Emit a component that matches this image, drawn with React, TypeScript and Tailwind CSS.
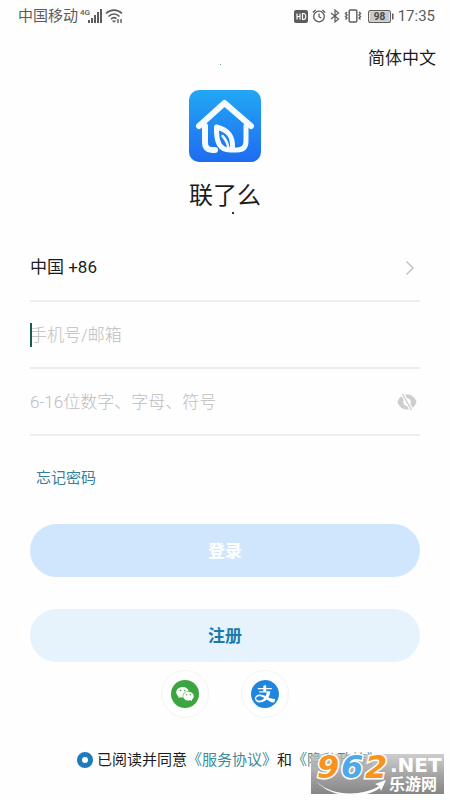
import { useState } from "react";
import { ChevronRight } from "lucide-react";
import { AiFillAlipayCircle, AiFillWechat } from "react-icons/ai";

function StatusBar() {
  return (
    <div className="flex h-8 items-center justify-between pl-[18px] pr-[15px] text-[15px] text-[#5c5c5c]">
      <div className="flex items-center gap-[2px]">
        <span>中国移动</span>
        <svg width="23" height="16" viewBox="0 0 23 16" fill="#5c5c5c">
          <text x="0" y="7" fontSize="8" fontWeight="500">4G</text>
          <rect x="8" y="12" width="2" height="3" />
          <rect x="11" y="10" width="2" height="5" />
          <rect x="14" y="7" width="2" height="8" />
          <rect x="17" y="4" width="2" height="11" />
          <rect x="20" y="1" width="2" height="14" />
        </svg>
        <svg width="18" height="16" viewBox="0 0 18 16" fill="none" stroke="#5c5c5c" strokeWidth="1.7">
          <path d="M1 5.5C5.5 1 12.5 1 17 5.5" />
          <path d="M3.5 8.5C6.8 5.3 11.2 5.3 14.5 8.5" />
          <path d="M6 11.2c1.7-1.7 3.7-1.9 5.5-.6" />
          <path d="M9 14.8 6.7 12.6h4.6z" fill="#5c5c5c" stroke="none" />
          <path d="M13 11v4M16 11v4" strokeWidth="1.4" />
        </svg>
      </div>
      <div className="flex items-center gap-1">
        <svg width="14" height="13" viewBox="0 0 14 13">
          <rect width="14" height="13" rx="2" fill="#5c5c5c" />
          <path d="M3 3.5v6M6 3.5v6M3 6.5h3M8.5 3.5v6h1c3 0 3-6 0-6z" fill="none" stroke="#fff" strokeWidth="1.2" />
        </svg>
        <svg width="14" height="14" viewBox="0 0 14 14" fill="none" stroke="#5c5c5c" strokeWidth="1.3">
          <circle cx="7" cy="7.5" r="5.3" />
          <path d="M7 4.5v3.2l2.2 1.3M.8 3.6 3.6 1M13.2 3.6 10.4 1" />
        </svg>
        <svg width="10" height="14" viewBox="0 0 10 14" fill="none" stroke="#5c5c5c" strokeWidth="1.2">
          <path d="m1 4 7.5 6L5 13V1l3.5 3L1 10" />
        </svg>
        <svg width="18" height="14" viewBox="0 0 18 14" fill="none" stroke="#5c5c5c" strokeWidth="1.4">
          <rect x="5.2" y="1" width="7.6" height="12" rx="1" />
          <path d="M3 3 1.5 4.500 3 6 1.500 7.500 3 9 1.500 10.500M15 3l1.500 1.500L15 6l1.500 1.500L15 9l1.500 1.500" />
        </svg>
        <svg className="ml-[2px]" width="26" height="13" viewBox="0 0 26 13">
          <rect x=".6" y=".6" width="21.8" height="11.8" rx="2" fill="#fff" stroke="#5c5c5c" strokeWidth="1.1" />
          <rect x="2" y="2" width="19" height="9" fill="#c9c9c9" />
          <rect x="24" y="3.5" width="1.5" height="6" fill="#5c5c5c" />
          <text x="11.5" y="10" textAnchor="middle" fontSize="10" fontWeight="700" fill="#4a4a4a">98</text>
        </svg>
        <span>17:35</span>
      </div>
    </div>
  );
}

function AppLogo() {
  return (
    <svg width="72" height="72" viewBox="0 0 72 72" fill="none">
      <defs>
        <linearGradient id="logo-bg" x1="0" y1="0" x2="0" y2="1">
          <stop offset="0" stopColor="#22a7f5" />
          <stop offset="1" stopColor="#1e6cf0" />
        </linearGradient>
      </defs>
      <rect width="72" height="72" rx="10" fill="url(#logo-bg)" />
      <g stroke="#f3fbff" strokeLinecap="round" strokeLinejoin="round">
        <path d="M10 36 35.5 13 62 36" strokeWidth="6" />
        <path d="M16 36V53c0 4.500 2.500 7 7 7h3" strokeWidth="6" />
        <path d="M57 36V51c0 6-3 9-9 9H41C31 60 27 53 27.500 37 40 40 44.500 47 43.500 59" strokeWidth="5" />
        <path d="M33.500 46c3 3 5 7 6 12" strokeWidth="2.500" />
      </g>
    </svg>
  );
}

function HiddenEye() {
  return (
    <svg width="20" height="18" viewBox="0 0 20 18" fill="none">
      <path d="M.5 9C2 4 6 1.500 10 1.500S18 4 19.500 9C18 14 14 16.500 10 16.500S2 14 .5 9z" fill="#cdcdcd" />
      <circle cx="10" cy="9" r="3.800" fill="#fff" />
      <path d="m5.500 1 9 16" stroke="#fff" strokeWidth="3.800" />
      <path d="m5.500 1 9 16" stroke="#cdcdcd" strokeWidth="1.400" />
    </svg>
  );
}

function SiteBadge() {
  return (
    <div className="pointer-events-none absolute bottom-[6px] right-[6px]">
      <svg width="133" height="53" viewBox="0 -10 133 53">
        <defs>
          <linearGradient id="badge-bg" x1="0" y1="0" x2="0" y2="1">
            <stop offset="0" stopColor="#b8b8b8" stopOpacity=".7" />
            <stop offset=".5" stopColor="#a6a6a6" />
            <stop offset="1" stopColor="#868686" />
          </linearGradient>
        </defs>
        <rect y="3" width="133" height="40" fill="url(#badge-bg)" />
        <path d="M6 31C22 46 52 45 68 35l-4-2 11-4-5 11-1-3C52 49 20 47 6 31z" fill="#fff" />
        <g
          fontFamily="DejaVu Sans"
          fontWeight="700"
          fontStyle="italic"
          fontSize="32"
          stroke="#fff"
          strokeWidth="3"
          paintOrder="stroke"
        >
          <text x="6" y="27" fill="#f7941d">9</text>
          <text x="30" y="27" fill="#4fa8e8">6</text>
          <text x="54" y="27" fill="#f7941d">2</text>
        </g>
        <text x="79" y="21" fontFamily="DejaVu Sans" fontWeight="700" fontSize="20" fill="#fff">.NET</text>
        <text x="78" y="39" fontWeight="700" fontSize="16" fill="#fff">乐游网</text>
      </svg>
    </div>
  );
}

export default function App() {
  const [account, setAccount] = useState("");
  const [password, setPassword] = useState("");

  return (
    <div className="relative min-h-screen w-full bg-[#fefefe] font-[Roboto,'Noto_Sans_CJK_SC',sans-serif] text-[#1c1c1c]">
      <StatusBar />
      <header className="flex h-[52px] items-center justify-end pr-[14px]">
        <button type="button" className="text-[17px] leading-6">简体中文</button>
      </header>

      <main className="px-[30px]">
        <div className="relative flex flex-col items-center pt-[6px]">
          <span className="absolute -top-5 left-1/2 -ml-[5px] size-px bg-[#5c9aa8]" />
          <AppLogo />
          <h1 className="mt-[18px] text-[24px] leading-8">联了么</h1>
          <span className="absolute -bottom-[2px] left-1/2 ml-[7px] size-[2px] bg-[#333]" />
        </div>

        <form className="mt-[23px]" onSubmit={(e) => e.preventDefault()}>
          <button
            type="button"
            className="flex h-[67px] w-full items-center justify-between border-b-2 border-[#ededed] text-[17px]"
          >
            <span>中国 +86</span>
            <ChevronRight className="-mr-[2px] size-6 text-[#bdbdbd]" strokeWidth={1.25} />
          </button>
          <div className="relative flex h-[67px] items-center border-b-2 border-[#ededed]">
            <input
              type="text"
              aria-label="手机号/邮箱"
              placeholder="手机号/邮箱"
              value={account}
              onChange={(e) => setAccount(e.target.value)}
              className="w-full pt-[2px] text-[17px] font-light outline-none placeholder:text-[#bdbdbd]"
            />
            <span className="absolute left-0 h-6 w-[2px] bg-[#12604f]" />
          </div>
          <div className="flex h-[67px] items-center border-b-2 border-[#ededed]">
            <input
              type="password"
              aria-label="密码"
              placeholder="6-16位数字、字母、符号"
              value={password}
              onChange={(e) => setPassword(e.target.value)}
              className="min-w-0 flex-1 pt-[2px] text-[17px] font-light outline-none placeholder:text-[#bdbdbd]"
            />
            <button type="button" aria-label="显示密码" className="mr-[3px]">
              <HiddenEye />
            </button>
          </div>

          <a href="#forgot" className="mt-8 ml-[6px] block w-fit text-[15px] leading-5 text-[#347f9d]">
            忘记密码
          </a>
          <button
            type="submit"
            className="mt-9 h-[53px] w-full rounded-full bg-[#cfe6fc] pt-[2px] text-[17px] font-bold text-white"
          >
            登录
          </button>
          <button
            type="button"
            className="mt-8 h-[53px] w-full rounded-full bg-[#e6f3fd] pt-[2px] text-[17px] font-bold text-[#1d7aa5]"
          >
            注册
          </button>
        </form>

        <div className="mt-2 flex justify-center gap-8">
          <button
            type="button"
            aria-label="微信"
            className="flex size-12 items-center justify-center rounded-full border border-[#f5f3f3]"
          >
            <span className="flex size-7 items-center justify-center rounded-full bg-[#3ba53f] text-white">
              <AiFillWechat className="size-5" />
            </span>
          </button>
          <button
            type="button"
            aria-label="支付宝"
            className="flex size-12 items-center justify-center rounded-full border border-[#f5f3f3]"
          >
            <AiFillAlipayCircle className="size-8 text-[#1f86dc]" />
          </button>
        </div>
      </main>

      <footer className="mt-8 flex items-center gap-1 whitespace-nowrap pb-[28px] pl-[77px] text-[15px] leading-5">
        <input
          type="radio"
          id="agree"
          className="size-4 shrink-0 appearance-none rounded-full border-5 border-[#1f7cbb] bg-white"
        />
        <div>
          <label htmlFor="agree">已阅读并同意</label>
          <a href="#terms" className="text-[#3d8d99]">《服务协议》</a>和
          <a href="#privacy" className="text-[#3d8d99]">《隐私政策》</a>
        </div>
      </footer>
      <SiteBadge />
    </div>
  );
}
